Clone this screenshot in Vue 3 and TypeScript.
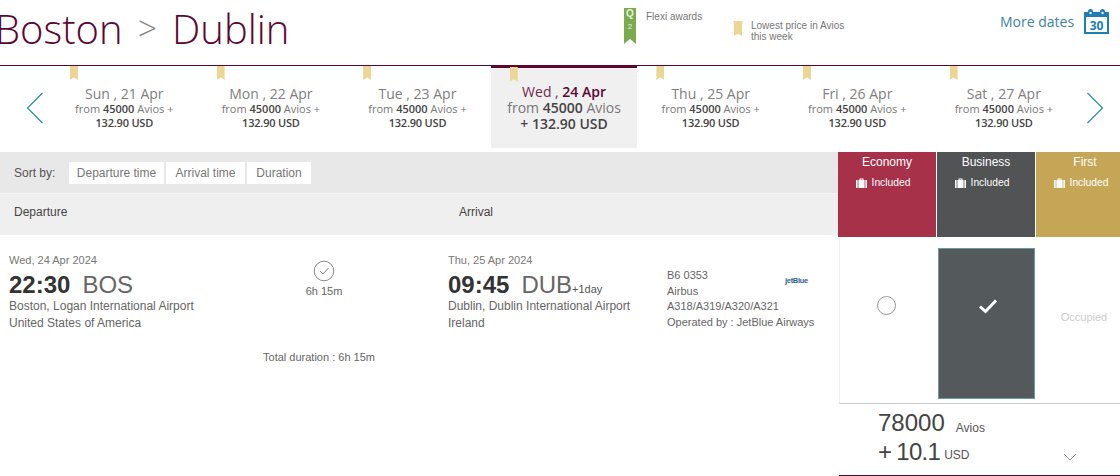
<script setup lang="ts">
interface Day {
  name: string;
  date: string;
  active?: boolean;
}

interface Fare {
  name: string;
  mod: string;
}

const days: Day[] = [
  { name: "Sun", date: "21 Apr" },
  { name: "Mon", date: "22 Apr" },
  { name: "Tue", date: "23 Apr" },
  { name: "Wed", date: "24 Apr", active: true },
  { name: "Thu", date: "25 Apr" },
  { name: "Fri", date: "26 Apr" },
  { name: "Sat", date: "27 Apr" },
];

const fares: Fare[] = [
  { name: "Economy", mod: "economy" },
  { name: "Business", mod: "business" },
  { name: "First", mod: "first" },
];

const sortOptions = ["Departure time", "Arrival time", "Duration"];
</script>

<template>
  <div class="page">
    <header class="top">
      <h1 class="route">
        <span>Boston</span>
        <span class="route__sep">&gt;</span>
        <span>Dublin</span>
      </h1>
      <div class="legend legend--flexi">
        <div class="flexi-ribbon"><span>Q</span><span class="flexi-ribbon__num">2</span></div>
        <span class="legend__text">Flexi awards</span>
      </div>
      <div class="legend legend--lowest">
        <div class="mini-ribbon"></div>
        <span class="legend__text">Lowest price in Avios<br />this week</span>
      </div>
      <a class="more-dates">
        <span>More dates</span>
        <svg viewBox="0 0 25 25" width="25" height="25" class="more-dates__icon">
          <path d="M0 3h25v22H0z" fill="#1b7fb5" />
          <rect x="2" y="8" width="21" height="15" fill="#fff" />
          <circle cx="6.5" cy="2.5" r="2.5" fill="#1b7fb5" />
          <circle cx="18.5" cy="2.5" r="2.5" fill="#1b7fb5" />
          <circle cx="6.5" cy="4" r="1.2" fill="#fff" />
          <circle cx="18.5" cy="4" r="1.2" fill="#fff" />
          <text x="12.5" y="21" text-anchor="middle" class="more-dates__num">30</text>
        </svg>
      </a>
    </header>

    <section class="strip">
      <button class="strip__arrow">
        <svg viewBox="0 0 18 32" width="18" height="32">
          <path d="M16.5 1L1.5 16l15 15" fill="none" stroke="#2b8c9c" stroke-width="1.2" />
        </svg>
      </button>
      <div
        v-for="day in days"
        :key="day.date"
        class="day"
        :class="{ 'day--active': day.active }"
      >
        <span class="day__ribbon"></span>
        <div class="day__date">
          {{ day.name }} , <span class="day__num">{{ day.date }}</span>
        </div>
        <div class="day__from">from <b>45000</b> Avios<template v-if="!day.active"> +</template></div>
        <div class="day__price">132.90 USD</div>
      </div>
      <button class="strip__arrow">
        <svg viewBox="0 0 18 32" width="18" height="32">
          <path d="M1.5 1l15 15-15 15" fill="none" stroke="#2b8c9c" stroke-width="1.2" />
        </svg>
      </button>
    </section>

    <main class="results">
      <div class="results__left">
        <div class="sort">
          <span class="sort__label">Sort by:</span>
          <div class="sort__btns">
            <button v-for="opt in sortOptions" :key="opt" class="sort__btn">{{ opt }}</button>
          </div>
        </div>
        <div class="cols">
          <span class="cols__dep">Departure</span>
          <span>Arrival</span>
        </div>
        <div class="flight">
          <div class="place">
            <div class="place__date">Wed, 24 Apr 2024</div>
            <div class="place__time"><b>22:30</b><span class="place__code">BOS</span></div>
            <div class="place__line">Boston, Logan International Airport</div>
            <div class="place__line">United States of America</div>
          </div>
          <div class="leg">
            <svg viewBox="0 0 22 22" width="22" height="22">
              <circle cx="11" cy="11" r="9.8" fill="none" stroke="#888" stroke-width="1" />
              <path d="M7 11l3 3 5.5-6" fill="none" stroke="#888" stroke-width="1" />
            </svg>
            <span>6h 15m</span>
          </div>
          <div class="place place--arrive">
            <div class="place__date">Thu, 25 Apr 2024</div>
            <div class="place__time">
              <b>09:45</b><span class="place__code">DUB</span><span class="place__plus">+1day</span>
            </div>
            <div class="place__line">Dublin, Dublin International Airport</div>
            <div class="place__line">Ireland</div>
          </div>
          <div class="carrier">
            <span class="carrier__logo">jetBlue</span>
            <div>B6 0353</div>
            <div>Airbus</div>
            <div>A318/A319/A320/A321</div>
            <div>Operated by : JetBlue Airways</div>
          </div>
        </div>
        <div class="total">Total duration : 6h 15m</div>
      </div>

      <aside class="fare">
        <div class="fare__heads">
          <div v-for="f in fares" :key="f.mod" class="fare__head" :class="`fare__head--${f.mod}`">
            <div class="fare__name">{{ f.name }}</div>
            <div class="fare__bag">
              <svg viewBox="0 0 11 10" width="11" height="10">
                <path d="M3.5 2V.6h4V2h-1V1.5h-2V2z" fill="#fff" />
                <rect x="0" y="2" width="1.6" height="8" fill="#fff" />
                <rect x="2.4" y="2" width="6.2" height="8" fill="#fff" />
                <rect x="9.4" y="2" width="1.6" height="8" fill="#fff" />
              </svg>
              <span>Included</span>
            </div>
          </div>
        </div>
        <div class="fare__cells">
          <div class="fare__cell fare__cell--radio"><span class="radio"></span></div>
          <div class="fare__cell fare__cell--picked">
            <svg viewBox="0 0 20 16" width="20" height="16">
              <path d="M2 8.5l5.5 5L18 2.5" fill="none" stroke="#fff" stroke-width="3" />
            </svg>
          </div>
          <div class="fare__cell fare__cell--occupied">Occupied</div>
        </div>
        <div class="price">
          <div class="price__row">
            <span class="price__big">78000</span><span class="price__unit price__unit--avios">Avios</span>
          </div>
          <div class="price__row">
            <span class="price__big price__big--usd">+ 10.1</span><span class="price__unit">USD</span>
          </div>
          <svg class="price__chevron" viewBox="0 0 14 8" width="14" height="8">
            <path d="M1 1l6 6 6-6" fill="none" stroke="#999" stroke-width="1" />
          </svg>
        </div>
      </aside>
    </main>
  </div>
</template>

<style>
html,
body {
  margin: 0;
  background: #fff;
  overflow: hidden;
}
</style>

<style scoped>
.page {
  width: 1120px;
  height: 476px;
  overflow: hidden;
  font-family: "Liberation Sans", Arial, sans-serif;
  color: #666;
}

.top {
  display: flex;
  height: 66px;
  box-sizing: border-box;
  border-bottom: 1px solid #5c0632;
}

.route {
  display: flex;
  gap: 15px;
  width: 624px;
  height: 60px;
  margin: 0 0 0 -5px;
  flex: none;
  font-family: "Open Sans", sans-serif;
  font-size: 40px;
  font-weight: 300;
  line-height: 57px;
  color: #5c0632;
}

.route__sep {
  color: #888;
  font-size: 34px;
}

.legend {
  display: flex;
  flex: none;
  font-size: 10px;
  line-height: 11px;
  color: #777;
}

.legend--flexi {
  width: 109px;
  margin-left: 5px;
  padding-top: 8px;
  gap: 10px;
  box-sizing: border-box;
}

.legend--flexi .legend__text {
  padding-top: 3px;
}

.legend--lowest {
  width: 250px;
  padding-top: 20px;
  gap: 8px;
  box-sizing: border-box;
}

.flexi-ribbon {
  display: flex;
  flex-direction: column;
  align-items: center;
  width: 12px;
  height: 36px;
  background: #7cab4f;
  color: #e4f0d8;
  font-size: 10px;
  font-weight: 700;
  line-height: 12px;
  clip-path: polygon(0 0, 100% 0, 100% 100%, 50% 86%, 0 100%);
}

.flexi-ribbon__num {
  margin-top: 1px;
  font-size: 8px;
  font-weight: 400;
}

.mini-ribbon {
  width: 10px;
  height: 15px;
  margin-top: 1px;
  background: #ecd595;
  clip-path: polygon(0 0, 100% 0, 90% 15%, 90% 100%, 50% 85%, 10% 100%, 10% 15%);
}

.more-dates {
  display: flex;
  gap: 10px;
  margin-left: 17px;
  padding-top: 9px;
  font-family: "Open Sans", sans-serif;
  font-size: 14px;
  line-height: 26px;
  color: #3b84a3;
  flex: none;
}

.more-dates__icon {
  display: block;
}

.more-dates__num {
  font-family: "Open Sans", sans-serif;
  font-size: 12px;
  font-weight: 700;
  fill: #1b7fb5;
}

.strip {
  display: grid;
  grid-template-columns: 51px repeat(7, 146.6px) 43px;
  height: 82px;
  margin-bottom: 4px;
}

.strip__arrow {
  display: flex;
  align-items: center;
  padding: 2px 0 0;
  border: 0;
  background: none;
  height: 82px;
}

.strip__arrow:first-child {
  justify-content: flex-end;
  padding-right: 7px;
}

.strip__arrow:last-child {
  padding-left: 9px;
}

.day {
  position: relative;
  padding-top: 20px;
  text-align: center;
  font-family: "Open Sans", sans-serif;
  font-size: 11px;
  line-height: 14px;
  color: #777;
}

.day__ribbon {
  position: absolute;
  top: 0;
  left: 19px;
  width: 8px;
  height: 14px;
  background: #ecd595;
  clip-path: polygon(0 0, 100% 0, 100% 100%, 50% 82%, 0 100%);
}

.day__date {
  font-size: 14px;
  line-height: 16px;
  color: #808080;
}

.day__from b {
  font-weight: 600;
  color: #444;
}

.day__price {
  color: #444;
  font-weight: 600;
  letter-spacing: -0.2px;
}

.day--active {
  box-sizing: border-box;
  height: 83px;
  padding-top: 16px;
  border-top: 3px solid #5c0632;
  margin-top: -1px;
  background: #f1f0f0;
  font-size: 14px;
  line-height: 16px;
}

.day--active .day__ribbon {
  top: -1px;
  height: 15px;
}

.day--active .day__date {
  color: #6d2a4d;
}

.day--active .day__num {
  font-weight: 600;
  color: #5c0632;
}

.day--active .day__price {
  letter-spacing: 0;
}

.day--active .day__price::before {
  content: "+ ";
}

.results {
  display: grid;
  grid-template-columns: 838px 282px;
}

.sort {
  display: flex;
  align-items: center;
  height: 41px;
  padding: 1px 0 0 14px;
  box-sizing: border-box;
  background: #e8e8e8;
  font-size: 12px;
}

.sort__label {
  width: 55px;
  color: #555;
}

.sort__btns {
  display: grid;
  grid-template-columns: 95px 79px 64px;
  gap: 2px;
}

.sort__btn {
  height: 22px;
  padding: 0;
  border: 0;
  background: #fff;
  font-family: inherit;
  font-size: 12px;
  color: #777;
}

.cols {
  display: flex;
  align-items: center;
  height: 42px;
  padding: 0 0 6px 14px;
  box-sizing: border-box;
  border-top: 1px solid #f4f4f4;
  background: #efefef;
  font-size: 12px;
  color: #444;
}

.cols__dep {
  width: 445px;
}

.flight {
  display: grid;
  grid-template-columns: 230px 170px 219px auto;
  padding: 18px 0 0 9px;
}

.place__date {
  font-size: 11px;
  line-height: 14px;
  color: #777;
}

.place__time {
  margin-top: 5px;
  font-size: 24px;
  line-height: 26px;
  white-space: nowrap;
}

.place__time b {
  color: #333;
}

.place__code {
  margin-left: 12px;
  color: #666;
}

.place__plus {
  font-size: 11px;
  line-height: 1;
  color: #555;
}

.place__line {
  font-size: 12px;
  line-height: 17px;
  white-space: nowrap;
}

.place--arrive {
  margin-left: 39px;
}

.leg {
  display: flex;
  flex-direction: column;
  align-items: center;
  gap: 3px;
  margin-top: 7px;
  font-size: 11px;
  line-height: 12px;
  color: #666;
}

.carrier {
  position: relative;
  width: 170px;
  margin-left: 39px;
  padding-top: 15px;
  font-size: 11px;
  line-height: 15.7px;
  white-space: nowrap;
}

.carrier__logo {
  position: absolute;
  top: 20px;
  left: 118px;
  font-size: 7.5px;
  font-weight: 700;
  letter-spacing: -0.3px;
  color: #2f5f96;
}

.total {
  width: 638px;
  margin-top: 19px;
  text-align: center;
  font-size: 11px;
  line-height: 12px;
}

.fare__heads {
  display: grid;
  grid-template-columns: 98px 98px 98px;
  gap: 1px;
  height: 85px;
}

.fare__head {
  padding-top: 3px;
  text-align: center;
  color: #fff;
}

.fare__head--economy {
  background: #a8314a;
}

.fare__head--business {
  background: #515354;
}

.fare__head--first {
  background: #c4a656;
}

.fare__name {
  font-size: 12px;
  line-height: 14px;
}

.fare__bag {
  display: flex;
  align-items: center;
  justify-content: center;
  gap: 5px;
  margin-top: 8px;
  padding-right: 8px;
  font-size: 10.3px;
  line-height: 11px;
}

.fare__cells {
  display: grid;
  grid-template-columns: 98px 97px 98px;
  height: 166px;
  margin-left: 1px;
  border-left: 1px solid #eee;
  border-bottom: 1px solid #ccc;
}

.fare__cell {
  display: flex;
  align-items: center;
  justify-content: center;
}

.fare__cell--radio {
  align-items: flex-start;
  padding: 59px 6px 0 0;
  box-sizing: border-box;
}

.radio {
  width: 17px;
  height: 17px;
  border: 1px solid #999;
  border-radius: 50%;
}

.fare__cell--picked {
  box-sizing: border-box;
  height: 151px;
  margin-top: 11px;
  padding: 0 0 35px 3px;
  border: 1px solid #6f98a5;
  background: #54595c;
}

.fare__cell--occupied {
  padding-bottom: 7px;
  font-size: 11px;
  color: #ccc;
}

.price {
  position: relative;
  height: 72px;
  margin-left: 1px;
  padding: 4px 0 0 39px;
  box-sizing: border-box;
  border-bottom: 1px solid #5c0632;
}

.price__row {
  display: flex;
  align-items: flex-end;
  height: 29px;
  color: #444;
}

.price__big {
  font-size: 24px;
  line-height: 29px;
}

.price__big--usd {
  word-spacing: -1px;
  letter-spacing: -0.7px;
}

.price__unit {
  margin: 0 0 4px 4px;
  font-size: 12px;
  line-height: 14px;
  color: #555;
}

.price__unit--avios {
  margin: 0 0 2px 11px;
}

.price__chevron {
  position: absolute;
  top: 49px;
  left: 224px;
}
</style>
